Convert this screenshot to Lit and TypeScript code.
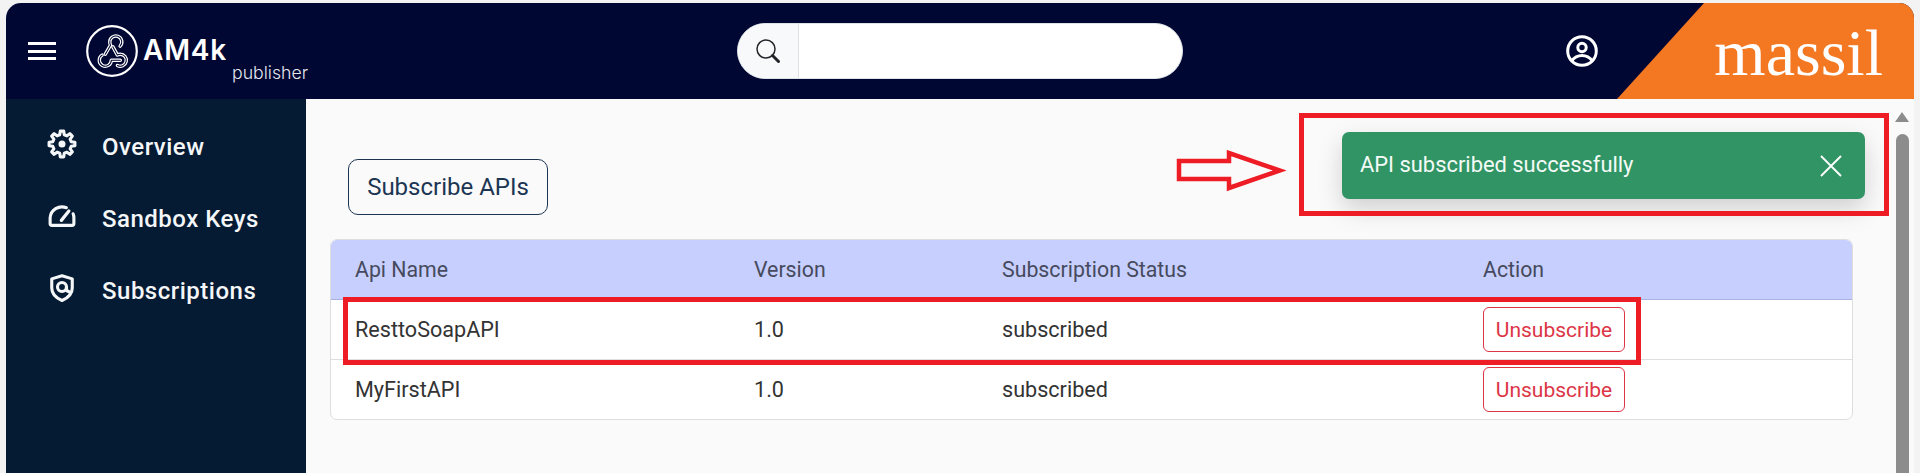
import { LitElement, html, css, svg } from "lit";
import { customElement } from "lit/decorators.js";

const rows = [
  { name: "ResttoSoapAPI", version: "1.0", status: "subscribed" },
  { name: "MyFirstAPI", version: "1.0", status: "subscribed" },
];

function gearPath(): string {
  const pts: string[] = [];
  const teeth = 8;
  for (let i = 0; i < teeth; i++) {
    const a = (i * 2 * Math.PI) / teeth - Math.PI / 2;
    const step = (2 * Math.PI) / teeth;
    const list: [number, number][] = [
      [7.6, a - step * 0.31],
      [10.4, a - step * 0.17],
      [10.4, a + step * 0.17],
      [7.6, a + step * 0.31],
    ];
    for (const [r, t] of list) {
      pts.push(`${(12 + r * Math.cos(t)).toFixed(2)} ${(12 + r * Math.sin(t)).toFixed(2)}`);
    }
  }
  return "M" + pts.join("L") + "Z";
}

@customElement("app-root")
export class AppRoot extends LitElement {
  static styles = css`
    :host {
      display: block;
      height: 473px;
      overflow: hidden;
      background: #f3f3f3;
      font-family: Roboto, "Liberation Sans", sans-serif;
      position: relative;
    }
    .frame {
      margin: 3px 6px 0;
      height: 470px;
      display: flex;
      flex-direction: column;
      border-radius: 15px 15px 0 0;
      overflow: hidden;
      background: #fafafa;
    }
    .header {
      height: 96px;
      flex: none;
      background: #000733;
      display: flex;
      align-items: flex-start;
      color: #fff;
    }
    .brand {
      width: 731px;
      flex: none;
      display: flex;
      align-items: flex-start;
    }
    .burger {
      margin: 39px 0 0 22px;
      width: 28px;
      height: 18px;
      display: flex;
      flex-direction: column;
      justify-content: space-between;
    }
    .burger i {
      display: block;
      height: 3px;
      background: #fff;
    }
    .logo-circle {
      margin: 22px 0 0 30px;
      width: 52px;
      height: 52px;
      flex: none;
    }
    .logo-text {
      margin: 0 0 0 5px;
      display: flex;
      flex-direction: column;
      font-family: Inter, sans-serif;
    }
    .am {
      margin-top: 31px;
      font-size: 28px;
      line-height: 32px;
      font-weight: 600;
      letter-spacing: 0.8px;
    }
    .pub {
      margin: -3px 0 0 89px;
      font-size: 17.700px;
      line-height: 20px;
      font-weight: 300;
      white-space: nowrap;
      color: #e4e6ee;
    }
    .search {
      margin-top: 20px;
      width: 446px;
      height: 56px;
      flex: none;
      display: flex;
      border-radius: 28px;
      background: #fff;
      overflow: hidden;
      border: 1px solid #dee2e6;
      box-sizing: border-box;
    }
    .search-ico {
      width: 61px;
      flex: none;
      background: #f8f9fa;
      border-right: 1px solid #dee2e6;
      display: flex;
      align-items: center;
      justify-content: center;
      box-sizing: border-box;
    }
    .spacer {
      flex: 1;
    }
    .user {
      margin: 32px 19px 0 0;
      width: 32px;
      height: 32px;
      flex: none;
    }
    .massil {
      width: 297px;
      height: 96px;
      flex: none;
      background: #f47721;
      clip-path: polygon(87px 0, 100% 0, 100% 100%, 0 100%);
      font-family: "Liberation Serif", serif;
      font-size: 66px;
      line-height: 100px;
      text-align: right;
      padding-right: 31px;
      box-sizing: border-box;
    }
    .body {
      flex: 1;
      display: flex;
      min-height: 0;
    }
    .side {
      width: 300px;
      flex: none;
      background: #051a33;
      color: #f4f6f8;
      padding-top: 24px;
      display: flex;
      flex-direction: column;
      gap: 24px;
      box-sizing: border-box;
    }
    .nav {
      height: 48px;
      display: flex;
      align-items: center;
      padding-left: 41px;
      gap: 25px;
      font-size: 24px;
      font-weight: 500;
      letter-spacing: 0.5px;
    }
    .nav svg {
      width: 30px;
      height: 30px;
      flex: none;
      margin-bottom: 6px;
    }
    .main {
      flex: 1;
      padding: 60px 61px 0 24px;
      display: flex;
      flex-direction: column;
      align-items: flex-start;
      min-width: 0;
    }
    .sub-btn {
      margin-left: 18px;
      width: 200px;
      height: 56px;
      box-sizing: border-box;
      border: 1px solid #1c3553;
      border-radius: 10px;
      background: transparent;
      color: #1c3553;
      font: 400 24px Roboto, sans-serif;
      padding: 0;
    }
    .table {
      margin-top: 24px;
      width: 100%;
      border: 1px solid #dedede;
      border-radius: 7px;
      overflow: hidden;
      background: #fff;
      box-sizing: border-box;
    }
    .row {
      display: grid;
      grid-template-columns: 399px 248px 481px 1fr;
      align-items: center;
      height: 60px;
      padding-left: 24px;
      font-size: 21.600px;
      color: #333;
      border-bottom: 1px solid #dedede;
      box-sizing: border-box;
    }
    .row:last-child {
      border-bottom: none;
      height: 59px;
    }
    .row.head {
      background: #c6cffd;
      color: #464a5e;
      font-size: 21.300px;
      border-bottom: 1px solid #a9b2e3;
    }
    .unsub {
      width: 142px;
      height: 45px;
      box-sizing: border-box;
      border: 1px solid #dc3545;
      border-radius: 6px;
      background: #fff;
      color: #dc3545;
      font: 400 21px Roboto, sans-serif;
      padding: 0;
      display: block;
    }
    .scroll {
      position: absolute;
      left: 1895px;
      top: 99px;
      width: 15px;
      bottom: 0;
    }
    .scroll .up {
      position: absolute;
      left: 0;
      top: 13px;
      width: 0;
      height: 0;
      border-left: 7.500px solid transparent;
      border-right: 7.500px solid transparent;
      border-bottom: 10px solid #8c8c8c;
    }
    .scroll .thumb {
      position: absolute;
      left: 1px;
      top: 35px;
      bottom: 0;
      width: 13px;
      background: #8c8c8c;
      border-radius: 7px 7px 0 0;
    }
    .toast {
      position: absolute;
      left: 1342px;
      top: 132px;
      width: 523px;
      height: 67px;
      box-sizing: border-box;
      border-radius: 7px;
      background: #319465;
      color: #f4fbf7;
      font-size: 21.900px;
      display: flex;
      align-items: center;
      justify-content: space-between;
      padding: 0 22px 0 18px;
      box-shadow: 0 10px 24px rgba(0, 0, 0, 0.17);
    }
    .toast span {
      margin-bottom: 2px;
    }
    .mark {
      position: absolute;
      box-sizing: border-box;
      border: 5px solid #ee1c25;
    }
    .m1 {
      left: 1299px;
      top: 113px;
      width: 590px;
      height: 103px;
    }
    .m2 {
      left: 343px;
      top: 297px;
      width: 1298px;
      height: 68px;
    }
    .arrow {
      position: absolute;
      left: 1176px;
      top: 150px;
      width: 110px;
      height: 42px;
    }
  `;

  private icon(p: unknown) {
    return html`<svg viewBox="0 0 24 24" fill="none" stroke="#f4f6f8" stroke-width="2.500" stroke-linejoin="round" stroke-linecap="round">${p}</svg>`;
  }

  render() {
    const hook = svg`<g transform="translate(26.500 26.500) scale(1.500) translate(-11.800 -11.200)" stroke-linecap="round" stroke-linejoin="round">
      <path d="M4.876 13.610a4 4 0 1 0 6.124 3.390h6"></path>
      <path d="M15.066 20.502a4 4 0 1 0 1.934-7.502c-.706 0-1.424.179-2 .5l-3-5.500"></path>
      <path d="M16.876 7.610a4 4 0 1 0-6.876-2.610c0 .7.1 1.300.5 2l-3.500 6"></path>
    </g>`;
    return html`
      <div class="frame">
        <div class="header">
          <div class="brand">
            <div class="burger"><i></i><i></i><i></i></div>
            <svg class="logo-circle" viewBox="0 0 52 52" fill="none" stroke="#fff">
              <circle cx="26" cy="26" r="24.800" stroke-width="2.200"></circle>
              <g stroke="#fff" stroke-width="2.300">${hook}</g>
              <g stroke="#000733" stroke-width="0.700">${hook}</g>
            </svg>
            <div class="logo-text">
              <div class="am">AM4k</div>
              <div class="pub">publisher</div>
            </div>
          </div>
          <div class="search">
            <div class="search-ico">
              <svg width="26" height="26" viewBox="0 0 26 26" fill="none" stroke="#212529">
                <circle cx="11" cy="11" r="9" stroke-width="1.500"></circle>
                <path d="M17.500 17.500l6 6" stroke-width="3" stroke-linecap="round"></path>
              </svg>
            </div>
          </div>
          <div class="spacer"></div>
          <svg class="user" viewBox="0 0 32 32" fill="none" stroke="#fff" stroke-width="3">
            <circle cx="16" cy="16" r="14.300"></circle>
            <circle cx="16" cy="12.500" r="4.200"></circle>
            <path d="M5.500 26c3-4 7-5.500 10.500-5.500s7.500 1.500 10.500 5.500"></path>
          </svg>
          <div class="massil">massil</div>
        </div>
        <div class="body">
          <div class="side">
            <div class="nav">
              ${this.icon(svg`<path d="${gearPath()}"></path><circle cx="12" cy="12" r="2.800" fill="#f4f6f8" stroke="none"></circle>`)}
              <span>Overview</span>
            </div>
            <div class="nav">
              ${this.icon(svg`<path d="M15.500 5.400A9.500 9.500 0 0 0 2.500 13.500V18a1.500 1.500 0 0 0 1.500 1.500h16a1.500 1.500 0 0 0 1.500-1.500v-4.500c0-1.200-.2-2.300-.6-3.300"></path><path d="M11.500 15.500l6-7.500" stroke-width="2.600"></path>`)}
              <span>Sandbox Keys</span>
            </div>
            <div class="nav">
              ${this.icon(svg`<path d="M12 2.200l8.200 2.500v7.300c0 4.500-3.500 8-8.200 10-4.700-2-8.200-5.500-8.200-10V4.700z"></path><circle cx="12" cy="11.200" r="3.600"></circle><path d="M15.600 11.200v2.800l2 1"></path>`)}
              <span>Subscriptions</span>
            </div>
          </div>
          <div class="main">
            <button class="sub-btn">Subscribe APIs</button>
            <div class="table">
              <div class="row head"><span>Api Name</span><span>Version</span><span>Subscription Status</span><span>Action</span></div>
              ${rows.map(
                (r) => html`<div class="row"><span>${r.name}</span><span>${r.version}</span><span>${r.status}</span><span><button class="unsub">Unsubscribe</button></span></div>`
              )}
            </div>
          </div>
        </div>
      </div>
      <div class="scroll"><div class="up"></div><div class="thumb"></div></div>
      <div class="toast">
        <span>API subscribed successfully</span>
        <svg width="24" height="24" viewBox="0 0 24 24" stroke="#fff" stroke-width="1.900"><path d="M2 2l20 20M22 2L2 22"></path></svg>
      </div>
      <div class="mark m1"></div>
      <div class="mark m2"></div>
      <svg class="arrow" viewBox="0 0 110 42" fill="none" stroke="#ee1c25" stroke-width="4.500">
        <path d="M3 11h50V3l51 17.500L53 38V29H3z"></path>
      </svg>
    `;
  }
}
